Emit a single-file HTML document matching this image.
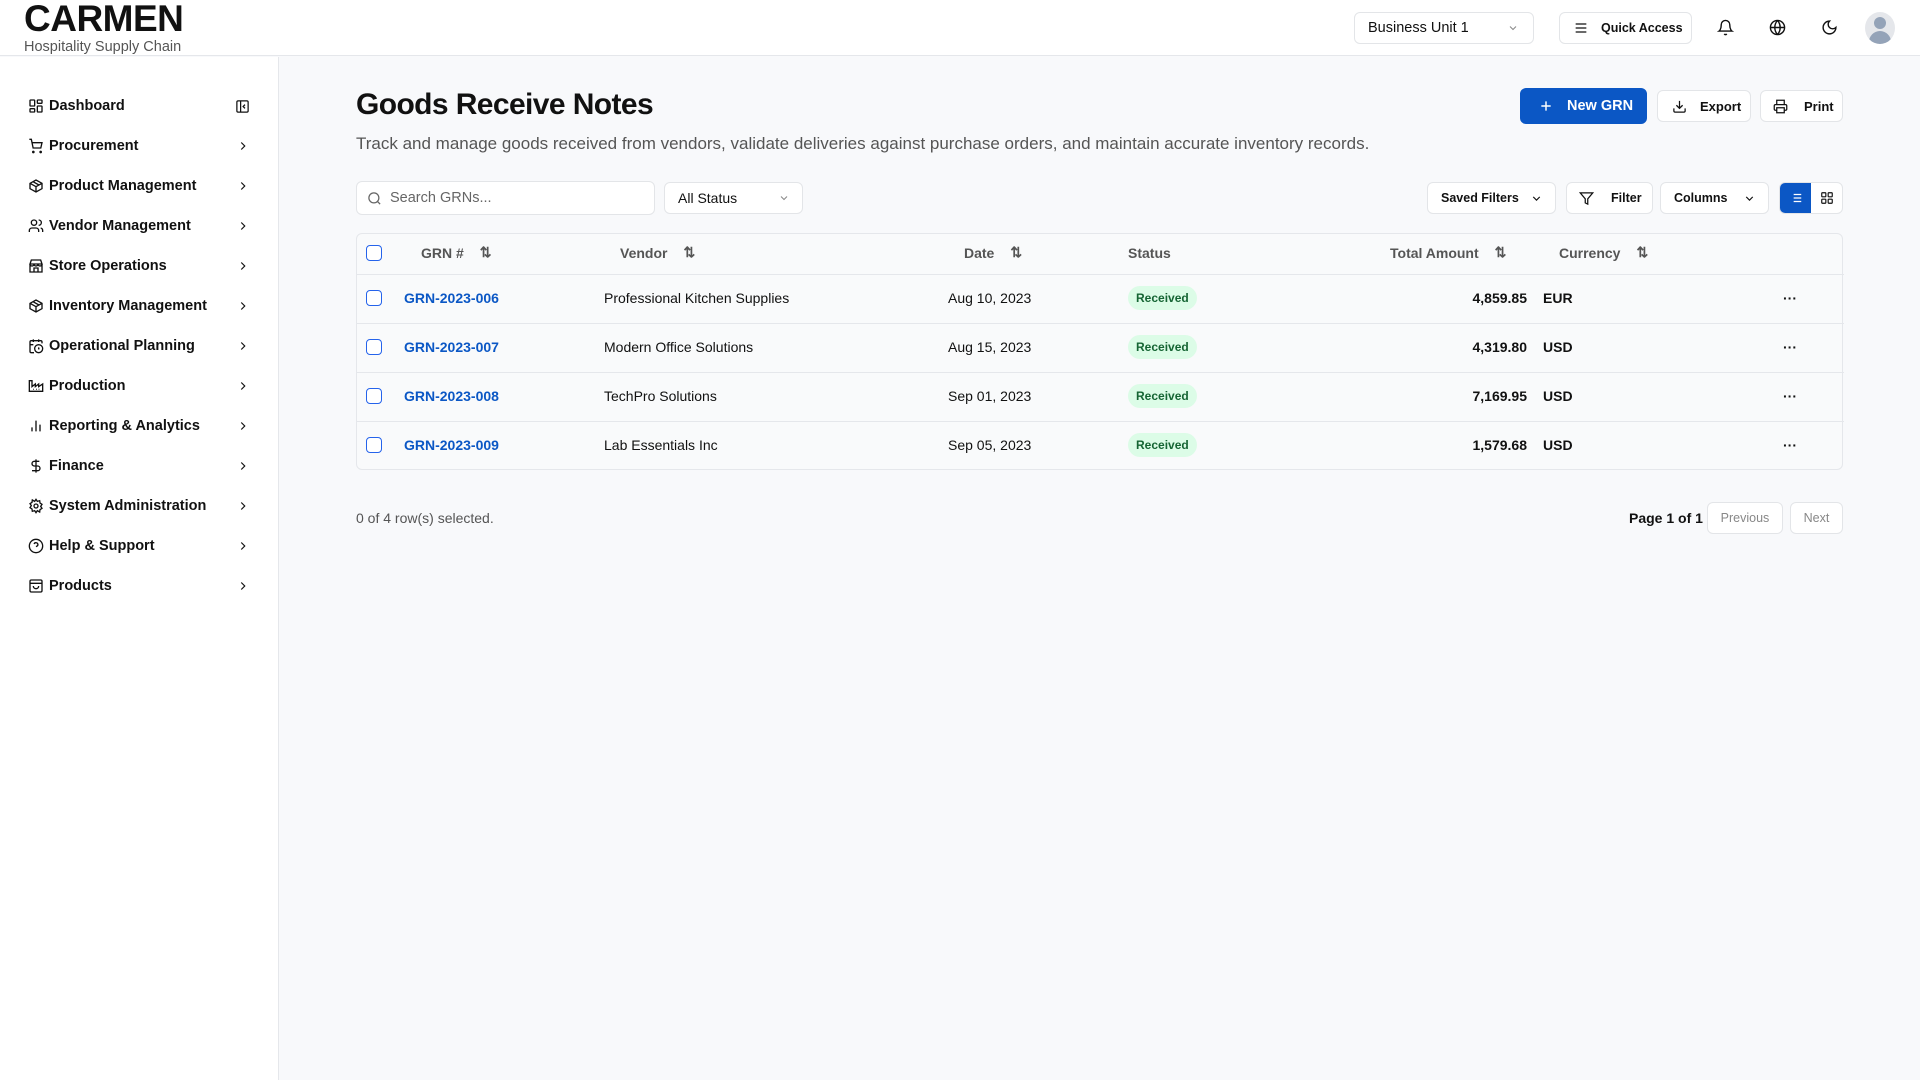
<!DOCTYPE html>
<html><head><meta charset="utf-8"><style>
*{box-sizing:border-box;margin:0;padding:0}
body{width:1920px;height:1080px;overflow:hidden;background:#f8f9fb;font-family:"Liberation Sans",sans-serif;color:#111;position:relative}
.abs{position:absolute}
svg{display:block}
.hdr{left:0;top:0;width:1920px;height:56px;background:#fff;border-bottom:1px solid #e5e7eb}
.side{left:0;top:57px;width:279px;height:1023px;background:#fff;border-right:1px solid #e5e7eb}
.nav{position:absolute;left:28px;width:222px;height:24px;display:flex;align-items:center;font-size:14.5px;font-weight:700;color:#111}
.nav svg.i{margin-right:5px}
.nav .ch{position:absolute;right:0}
.btn{position:absolute;background:#fff;border:1px solid #e3e5e8;border-radius:6px;display:flex;align-items:center;font-size:13px;font-weight:700;color:#111}
.th{position:absolute;top:-2px;height:41px;display:flex;align-items:center;font-size:14px;color:#555;font-weight:700}
.row{position:absolute;left:0;width:1487px;height:49px;border-top:1px solid #e5e7eb}
.cell{position:absolute;top:-2px;height:49px;display:flex;align-items:center;font-size:14px;color:#111}
.cb{position:absolute;left:10px;width:16px;height:16px;border:1.6px solid #2563eb;border-radius:4px;background:#fff}
.badge{background:#dcfce7;color:#166534;font-size:12px;font-weight:700;padding:5px 8px;border-radius:12px}
</style></head><body>
<div class="abs hdr"></div>
<div class="abs" style="left:24px;top:-2px;font-size:37px;font-weight:700;letter-spacing:-0.5px">CARMEN</div>
<div class="abs" style="left:24px;top:39px;font-size:14.5px;color:#555">Hospitality Supply Chain</div>

<div class="btn" style="left:1354px;top:12px;width:180px;height:32px;padding-left:13px;font-weight:400;font-size:14.5px">Business Unit 1<svg style="position:absolute;right:14px" width="12" height="12" viewBox="0 0 24 24" fill="none" stroke="#888" stroke-width="2"><path d="M6 9l6 6 6-6"/></svg></div>
<div class="btn" style="left:1559px;top:12px;width:133px;height:32px;padding-left:13px;font-size:12.5px"><svg width="16" height="16" viewBox="0 0 24 24" fill="none" stroke="#111" stroke-width="2"><path d="M4 6h16M4 12h16M4 18h16"/></svg><span style="margin-left:12px">Quick Access</span></div>
<svg class="abs" style="left:1717px;top:19px" width="17" height="17" viewBox="0 0 24 24" fill="none" stroke="#111" stroke-width="2"><path d="M6 8a6 6 0 0112 0c0 7 3 9 3 9H3s3-2 3-9M10.3 21a1.9 1.9 0 003.4 0"/></svg>
<svg class="abs" style="left:1769px;top:19px" width="17" height="17" viewBox="0 0 24 24" fill="none" stroke="#111" stroke-width="2"><circle cx="12" cy="12" r="10"/><path d="M2 12h20M12 2a15 15 0 010 20M12 2a15 15 0 000 20"/></svg>
<svg class="abs" style="left:1821px;top:19px" width="17" height="17" viewBox="0 0 24 24" fill="none" stroke="#111" stroke-width="2"><path d="M12 3a6 6 0 009 9 9 9 0 11-9-9z"/></svg>
<div class="abs" style="left:1865px;top:12px;width:30px;height:32px;border-radius:50%;background:#e5e7eb;overflow:hidden"><div style="position:absolute;left:9px;top:5px;width:12px;height:12px;border-radius:50%;background:#94a3b8"></div><div style="position:absolute;left:4px;top:19px;width:22px;height:16px;border-radius:11px 11px 0 0;background:#94a3b8"></div></div>

<div class="abs side"></div>
<div class="nav" style="top:94px"><svg class="i" width="16" height="16" viewBox="0 0 24 24" fill="none" stroke="#111" stroke-width="2"><rect x="3" y="3" width="7" height="9" rx="1"/><rect x="14" y="3" width="7" height="5" rx="1"/><rect x="14" y="12" width="7" height="9" rx="1"/><rect x="3" y="16" width="7" height="5" rx="1"/></svg>Dashboard<svg class="ch" width="15" height="15" viewBox="0 0 24 24" fill="none" stroke="#111" stroke-width="2"><rect x="3" y="3" width="18" height="18" rx="2"/><path d="M9 3v18M16 15l-3-3 3-3"/></svg></div>
<div class="nav" style="top:134px"><svg class="i" width="16" height="16" viewBox="0 0 24 24" fill="none" stroke="#111" stroke-width="2"><circle cx="8" cy="21" r="1"/><circle cx="19" cy="21" r="1"/><path d="M2 2h3l2.7 13h11.5L21 7H6"/></svg>Procurement<svg class="ch" width="14" height="14" viewBox="0 0 24 24" fill="none" stroke="#111" stroke-width="2"><path d="M9 6l6 6-6 6"/></svg></div>
<div class="nav" style="top:174px"><svg class="i" width="16" height="16" viewBox="0 0 24 24" fill="none" stroke="#111" stroke-width="2"><path d="M21 8l-9-5-9 5v8l9 5 9-5zM3 8l9 5 9-5M12 13v8M7.5 5.5l9 5"/></svg>Product Management<svg class="ch" width="14" height="14" viewBox="0 0 24 24" fill="none" stroke="#111" stroke-width="2"><path d="M9 6l6 6-6 6"/></svg></div>
<div class="nav" style="top:214px"><svg class="i" width="16" height="16" viewBox="0 0 24 24" fill="none" stroke="#111" stroke-width="2"><circle cx="9" cy="7" r="4"/><path d="M2 21v-2a4 4 0 014-4h6a4 4 0 014 4v2M16 3a4 4 0 010 8M22 21v-2a4 4 0 00-3-4"/></svg>Vendor Management<svg class="ch" width="14" height="14" viewBox="0 0 24 24" fill="none" stroke="#111" stroke-width="2"><path d="M9 6l6 6-6 6"/></svg></div>
<div class="nav" style="top:254px"><svg class="i" width="16" height="16" viewBox="0 0 24 24" fill="none" stroke="#111" stroke-width="2"><path d="M3 9l2-6h14l2 6zM3 9v12h18V9M3 9a3 3 0 006 0 3 3 0 006 0 3 3 0 006 0M9 21v-6h6v6"/></svg>Store Operations<svg class="ch" width="14" height="14" viewBox="0 0 24 24" fill="none" stroke="#111" stroke-width="2"><path d="M9 6l6 6-6 6"/></svg></div>
<div class="nav" style="top:294px"><svg class="i" width="16" height="16" viewBox="0 0 24 24" fill="none" stroke="#111" stroke-width="2"><path d="M21 8l-9-5-9 5v8l9 5 9-5zM3 8l9 5 9-5M12 13v8M7.5 5.5l9 5"/></svg>Inventory Management<svg class="ch" width="14" height="14" viewBox="0 0 24 24" fill="none" stroke="#111" stroke-width="2"><path d="M9 6l6 6-6 6"/></svg></div>
<div class="nav" style="top:334px"><svg class="i" width="16" height="16" viewBox="0 0 24 24" fill="none" stroke="#111" stroke-width="2"><path d="M8 2v4M16 2v4M21 8V6a2 2 0 00-2-2H5a2 2 0 00-2 2v14a2 2 0 002 2h4M3 10h5"/><circle cx="16" cy="16" r="6"/><path d="M16 14v2l1 1"/></svg>Operational Planning<svg class="ch" width="14" height="14" viewBox="0 0 24 24" fill="none" stroke="#111" stroke-width="2"><path d="M9 6l6 6-6 6"/></svg></div>
<div class="nav" style="top:374px"><svg class="i" width="16" height="16" viewBox="0 0 24 24" fill="none" stroke="#111" stroke-width="2"><path d="M2 20V4h4v9l5-4v4l5-4v4l6-4v11zM8 17h1M12 17h1M16 17h1"/></svg>Production<svg class="ch" width="14" height="14" viewBox="0 0 24 24" fill="none" stroke="#111" stroke-width="2"><path d="M9 6l6 6-6 6"/></svg></div>
<div class="nav" style="top:414px"><svg class="i" width="16" height="16" viewBox="0 0 24 24" fill="none" stroke="#111" stroke-width="2"><path d="M6 20v-6M12 20V4M18 20V10"/></svg>Reporting &amp; Analytics<svg class="ch" width="14" height="14" viewBox="0 0 24 24" fill="none" stroke="#111" stroke-width="2"><path d="M9 6l6 6-6 6"/></svg></div>
<div class="nav" style="top:454px"><svg class="i" width="16" height="16" viewBox="0 0 24 24" fill="none" stroke="#111" stroke-width="2"><path d="M12 2v20M17 5H9.5a3.5 3.5 0 000 7h5a3.5 3.5 0 010 7H6"/></svg>Finance<svg class="ch" width="14" height="14" viewBox="0 0 24 24" fill="none" stroke="#111" stroke-width="2"><path d="M9 6l6 6-6 6"/></svg></div>
<div class="nav" style="top:494px"><svg class="i" width="16" height="16" viewBox="0 0 24 24" fill="none" stroke="#111" stroke-width="2"><circle cx="12" cy="12" r="3"/><path d="M12 2l2 3 3.5-1 .5 3.5 3 2-2 3 2 3-3 2-.5 3.5L14 19l-2 3-2-3-3.5 1L6 16.5 3 14.5l2-3-2-3 3-2L6.5 3 10 5z"/></svg>System Administration<svg class="ch" width="14" height="14" viewBox="0 0 24 24" fill="none" stroke="#111" stroke-width="2"><path d="M9 6l6 6-6 6"/></svg></div>
<div class="nav" style="top:534px"><svg class="i" width="16" height="16" viewBox="0 0 24 24" fill="none" stroke="#111" stroke-width="2"><circle cx="12" cy="12" r="10"/><path d="M9.1 9a3 3 0 015.8 1c0 2-3 3-3 3M12 17h.01"/></svg>Help &amp; Support<svg class="ch" width="14" height="14" viewBox="0 0 24 24" fill="none" stroke="#111" stroke-width="2"><path d="M9 6l6 6-6 6"/></svg></div>
<div class="nav" style="top:574px"><svg class="i" width="16" height="16" viewBox="0 0 24 24" fill="none" stroke="#111" stroke-width="2"><rect x="3" y="3" width="18" height="18" rx="2"/><path d="M3 8h18M8 12a4 4 0 008 0"/></svg>Products<svg class="ch" width="14" height="14" viewBox="0 0 24 24" fill="none" stroke="#111" stroke-width="2"><path d="M9 6l6 6-6 6"/></svg></div>

<div class="abs" style="left:356px;top:88px;font-size:30px;font-weight:700;letter-spacing:-0.6px">Goods Receive Notes</div>
<div class="abs" style="left:356px;top:134px;font-size:17px;color:#555">Track and manage goods received from vendors, validate deliveries against purchase orders, and maintain accurate inventory records.</div>

<div class="btn" style="left:1520px;top:88px;width:127px;height:36px;background:#0b57c5;border-color:#0b57c5;color:#fff;font-size:14.5px;padding-left:18px"><svg width="14" height="14" viewBox="0 0 24 24" fill="none" stroke="#fff" stroke-width="2.5"><path d="M12 4v16M4 12h16"/></svg><span style="margin-left:14px">New GRN</span></div>
<div class="btn" style="left:1657px;top:90px;width:94px;height:32px;padding-left:14px"><svg width="15" height="15" viewBox="0 0 24 24" fill="none" stroke="#111" stroke-width="2"><path d="M21 15v4a2 2 0 01-2 2H5a2 2 0 01-2-2v-4M7 10l5 5 5-5M12 15V3"/></svg><span style="margin-left:13px">Export</span></div>
<div class="btn" style="left:1760px;top:90px;width:83px;height:32px;padding-left:12px"><svg width="15" height="15" viewBox="0 0 24 24" fill="none" stroke="#111" stroke-width="2"><path d="M6 9V2h12v7M6 18H4a2 2 0 01-2-2v-5a2 2 0 012-2h16a2 2 0 012 2v5a2 2 0 01-2 2h-2"/><rect x="6" y="14" width="12" height="8"/></svg><span style="margin-left:16px">Print</span></div>

<div class="btn" style="left:356px;top:181px;width:299px;height:34px;padding-left:10px;font-weight:400;font-size:14.5px;color:#666"><svg width="15" height="15" viewBox="0 0 24 24" fill="none" stroke="#666" stroke-width="2"><circle cx="11" cy="11" r="8"/><path d="M21 21l-4.3-4.3"/></svg><span style="margin-left:8px">Search GRNs...</span></div>
<div class="btn" style="left:664px;top:182px;width:139px;height:32px;padding-left:13px;font-weight:400;font-size:14px">All Status<svg style="position:absolute;right:12px" width="12" height="12" viewBox="0 0 24 24" fill="none" stroke="#888" stroke-width="2"><path d="M6 9l6 6 6-6"/></svg></div>

<div class="btn" style="left:1427px;top:182px;width:129px;height:32px;padding-left:13px;font-size:12.5px">Saved Filters<svg style="position:absolute;right:12px" width="13" height="13" viewBox="0 0 24 24" fill="none" stroke="#111" stroke-width="2.2"><path d="M6 9l6 6 6-6"/></svg></div>
<div class="btn" style="left:1566px;top:182px;width:87px;height:32px;padding-left:12px;font-size:12.5px"><svg width="15" height="15" viewBox="0 0 24 24" fill="none" stroke="#111" stroke-width="2"><path d="M22 3H2l8 9.5V19l4 2v-8.5z"/></svg><span style="margin-left:17px">Filter</span></div>
<div class="btn" style="left:1660px;top:182px;width:109px;height:32px;padding-left:13px;font-size:12.5px">Columns<svg style="position:absolute;right:12px" width="13" height="13" viewBox="0 0 24 24" fill="none" stroke="#111" stroke-width="2.2"><path d="M6 9l6 6 6-6"/></svg></div>
<div class="btn" style="left:1779px;top:182px;width:64px;height:32px;overflow:hidden"><div style="width:32px;height:32px;background:#0b57c5;display:flex;align-items:center;justify-content:center"><svg width="14" height="14" viewBox="0 0 24 24" fill="none" stroke="#fff" stroke-width="2"><path d="M8 6h13M8 12h13M8 18h13M3 6h.01M3 12h.01M3 18h.01"/></svg></div><div style="width:31px;display:flex;justify-content:center"><svg width="14" height="14" viewBox="0 0 24 24" fill="none" stroke="#111" stroke-width="2"><rect x="3" y="3" width="7" height="7" rx="1"/><rect x="14" y="3" width="7" height="7" rx="1"/><rect x="3" y="14" width="7" height="7" rx="1"/><rect x="14" y="14" width="7" height="7" rx="1"/></svg></div></div>

<div class="abs" style="left:356px;top:233px;width:1487px;height:237px;border:1px solid #e5e7eb;border-radius:6px;background:#f9fafb">
 <div class="cb" style="top:11px;left:9px"></div>
 <div class="th" style="left:64px">GRN #<span style="margin-left:16px;color:#555">⇅</span></div>
 <div class="th" style="left:263px">Vendor<span style="margin-left:16px">⇅</span></div>
 <div class="th" style="left:607px">Date<span style="margin-left:16px">⇅</span></div>
 <div class="th" style="left:771px">Status</div>
 <div class="th" style="left:1033px">Total Amount<span style="margin-left:16px">⇅</span></div>
 <div class="th" style="left:1202px">Currency<span style="margin-left:16px">⇅</span></div>

 <div class="row" style="top:40px"><div class="cb" style="top:15px;left:9px"></div><div class="cell" style="left:47px;color:#0b57c5;font-weight:700">GRN-2023-006</div><div class="cell" style="left:247px">Professional Kitchen Supplies</div><div class="cell" style="left:591px">Aug 10, 2023</div><div class="cell" style="left:771px"><span class="badge">Received</span></div><div class="cell" style="right:317px;font-weight:700">4,859.85</div><div class="cell" style="left:1186px;font-weight:700">EUR</div><div class="cell" style="left:1426px;font-weight:700">···</div></div>
 <div class="row" style="top:89px"><div class="cb" style="top:15px;left:9px"></div><div class="cell" style="left:47px;color:#0b57c5;font-weight:700">GRN-2023-007</div><div class="cell" style="left:247px">Modern Office Solutions</div><div class="cell" style="left:591px">Aug 15, 2023</div><div class="cell" style="left:771px"><span class="badge">Received</span></div><div class="cell" style="right:317px;font-weight:700">4,319.80</div><div class="cell" style="left:1186px;font-weight:700">USD</div><div class="cell" style="left:1426px;font-weight:700">···</div></div>
 <div class="row" style="top:138px"><div class="cb" style="top:15px;left:9px"></div><div class="cell" style="left:47px;color:#0b57c5;font-weight:700">GRN-2023-008</div><div class="cell" style="left:247px">TechPro Solutions</div><div class="cell" style="left:591px">Sep 01, 2023</div><div class="cell" style="left:771px"><span class="badge">Received</span></div><div class="cell" style="right:317px;font-weight:700">7,169.95</div><div class="cell" style="left:1186px;font-weight:700">USD</div><div class="cell" style="left:1426px;font-weight:700">···</div></div>
 <div class="row" style="top:187px"><div class="cb" style="top:15px;left:9px"></div><div class="cell" style="left:47px;color:#0b57c5;font-weight:700">GRN-2023-009</div><div class="cell" style="left:247px">Lab Essentials Inc</div><div class="cell" style="left:591px">Sep 05, 2023</div><div class="cell" style="left:771px"><span class="badge">Received</span></div><div class="cell" style="right:317px;font-weight:700">1,579.68</div><div class="cell" style="left:1186px;font-weight:700">USD</div><div class="cell" style="left:1426px;font-weight:700">···</div></div>
</div>

<div class="abs" style="left:356px;top:510px;font-size:14px;color:#555">0 of 4 row(s) selected.</div>
<div class="abs" style="left:1629px;top:510px;font-size:14px;font-weight:700">Page 1 of 1</div>
<div class="btn" style="left:1707px;top:502px;width:76px;height:32px;justify-content:center;color:#888;font-weight:400;font-size:12.5px">Previous</div>
<div class="btn" style="left:1790px;top:502px;width:53px;height:32px;justify-content:center;color:#888;font-weight:400;font-size:12.5px">Next</div>
</body></html>
